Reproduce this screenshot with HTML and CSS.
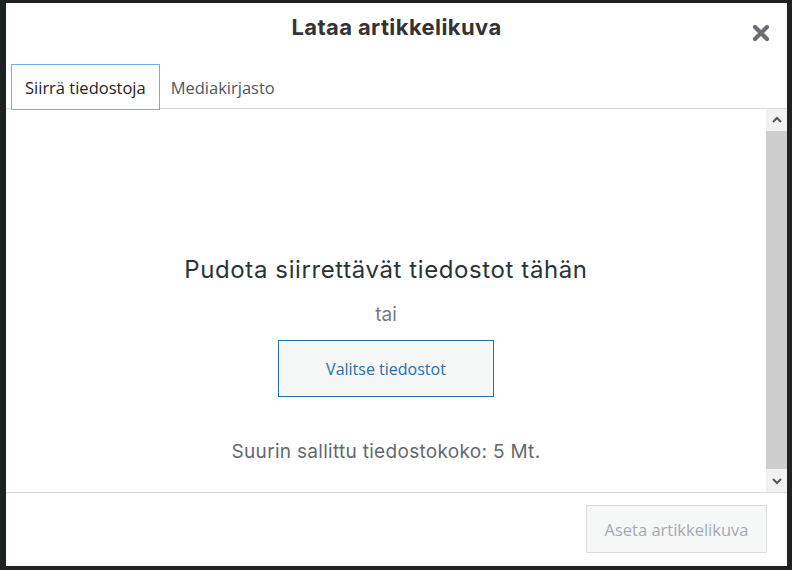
FILE: index.html
```html
<!DOCTYPE html>
<html lang="fi">
<head>
    <meta charset="UTF-8">
    <meta name="viewport" content="width=device-width, initial-scale=1.0">
    <title>Lataa artikkelikuva</title>
    <link rel="stylesheet" href="styles.css">
</head>
<body>

    <div class="modal">
        <!-- Header with title and close button -->
        <div class="modal-header">
            <h1 class="modal-title">Lataa artikkelikuva</h1>
            <button class="close-button" type="button" aria-label="Sulje">
                <svg width="18" height="18" viewBox="0 0 18 18">
                    <path d="M3 3 L15 15 M15 3 L3 15" stroke="#6b6e72" stroke-width="4.2" stroke-linecap="round"/>
                </svg>
            </button>
        </div>

        <!-- Tabs -->
        <div class="tabs">
            <button class="tab active" type="button">Siirrä tiedostoja</button>
            <button class="tab" type="button">Mediakirjasto</button>
        </div>

        <!-- Upload area -->
        <div class="content">
            <div class="upload-area">
                <p class="drop-text">Pudota siirrettävät tiedostot tähän</p>
                <p class="or-text">tai</p>
                <button class="select-button" type="button">Valitse tiedostot</button>
                <p class="size-text">Suurin sallittu tiedostokoko: 5 Mt.</p>
            </div>
            <div class="scrollbar">
                <div class="scroll-arrow">
                    <svg width="10" height="7" viewBox="0 0 10 7"><path d="M1 6 L5 2 L9 6" stroke="#555" stroke-width="2" fill="none"/></svg>
                </div>
                <div class="scroll-thumb"></div>
                <div class="scroll-arrow">
                    <svg width="10" height="7" viewBox="0 0 10 7"><path d="M1 1 L5 5 L9 1" stroke="#555" stroke-width="2" fill="none"/></svg>
                </div>
            </div>
        </div>

        <!-- Footer -->
        <div class="modal-footer">
            <button class="set-button" type="button" disabled>Aseta artikkelikuva</button>
        </div>
    </div>

</body>
</html>
```

FILE: styles.css
```css
body {
    margin: 0;
    padding: 3px 5px 4px 6px;
    background-color: #1f2223;
    height: 570px;
    box-sizing: border-box;
    font-family: "Open Sans", Arial, sans-serif;
    overflow: hidden;
}
button {
    font-family: inherit;
}
.modal {
    background-color: #fff;
    height: 563px;
    display: flex;
    flex-direction: column;
}

/* Header */
.modal-header {
    height: 61px;
    display: flex;
    align-items: flex-start;
    justify-content: center;
    position: relative;
}
.modal-title {
    margin: 11px 0 0;
    font-family: Inter, "Noto Sans", sans-serif;
    font-size: 22px;
    letter-spacing: 0.4px;
    font-weight: 700;
    color: #333;
}
.close-button {
    position: absolute;
    right: 17px;
    top: 21px;
    background: none;
    border: none;
    padding: 0;
    width: 18px;
    height: 18px;
    cursor: pointer;
}

/* Tabs */
.tabs {
    display: flex;
    padding-left: 5px;
    border-bottom: 1px solid #dcdcde;
    height: 44px;
}
.tab {
    background: none;
    border: 1px solid transparent;
    padding: 0 13px;
    height: 46px;
    font-size: 16.5px;
    color: #50575e;
    cursor: pointer;
}
.tab + .tab {
    padding-left: 10px;
}
.tab.active {
    border-color: #72aee6;
    color: #1d2327;
    background-color: #fff;
}

/* Content */
.content {
    flex: 1;
    display: flex;
}
.upload-area {
    flex: 1;
    display: flex;
    flex-direction: column;
    align-items: center;
    text-align: center;
    padding-top: 146px;
}
.drop-text {
    margin: 0;
    font-family: Inter, "Noto Sans", sans-serif;
    font-size: 24px;
    letter-spacing: 0.6px;
    color: #2c3338;
}
.or-text {
    margin: 19px 0 0;
    font-family: Inter, "Noto Sans", sans-serif;
    font-size: 19px;
    color: #787c82;
}
.select-button {
    margin-top: 14px;
    width: 216px;
    height: 57px;
    background-color: #f6f7f7;
    border: 1px solid #2271b1;
    color: #2271b1;
    font-size: 16px;
    cursor: pointer;
}
.size-text {
    margin: 43px 0 0;
    font-family: Inter, "Noto Sans", sans-serif;
    font-size: 19px;
    letter-spacing: 0.3px;
    color: #646970;
}

/* Fake scrollbar */
.scrollbar {
    width: 21px;
    display: flex;
    flex-direction: column;
    background-color: #f1f1f1;
}
.scroll-arrow {
    height: 21px;
    display: flex;
    align-items: center;
    justify-content: center;
}
.scroll-thumb {
    flex: 1;
    background-color: #cdcdcd;
    margin: 1px 0 2px;
}

/* Footer */
.modal-footer {
    height: 73px;
    border-top: 1px solid #dcdcde;
    display: flex;
    justify-content: flex-end;
    align-items: flex-start;
    padding-right: 20px;
}
.set-button {
    margin-top: 12px;
    width: 181px;
    height: 48px;
    padding: 0;
    font-size: 16.5px;
    background-color: #f6f7f7;
    border: 1px solid #dcdcde;
    color: #a7aaad;
}
```
